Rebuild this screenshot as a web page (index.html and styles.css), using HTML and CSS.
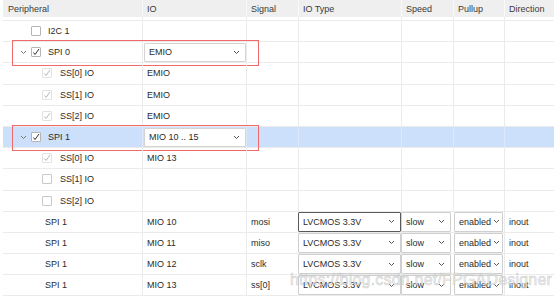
FILE: index.html
```html
<!DOCTYPE html>
<html lang="en">
<head>
    <meta charset="UTF-8">
    <meta name="viewport" content="width=device-width, initial-scale=1.0">
    <title>MIO Configuration</title>
    <link rel="stylesheet" href="styles.css">
</head>
<body>

<div class="table">
    <div class="row head">
        <div class="cell">Peripheral</div>
        <div class="cell">IO</div>
        <div class="cell">Signal</div>
        <div class="cell">IO Type</div>
        <div class="cell">Speed</div>
        <div class="cell">Pullup</div>
        <div class="cell">Direction</div>
    </div>

    <div class="row spacer">
        <div class="cell"></div><div class="cell"></div><div class="cell"></div><div class="cell"></div><div class="cell"></div><div class="cell"></div><div class="cell"></div>
    </div>

    <!-- I2C 1 -->
    <div class="row">
        <div class="cell tree lvl1"><span class="box"></span>I2C 1</div>
        <div class="cell"></div><div class="cell"></div><div class="cell"></div><div class="cell"></div><div class="cell"></div><div class="cell"></div>
    </div>

    <!-- SPI 0 -->
    <div class="row">
        <div class="cell tree lvl1">
            <svg class="twist" width="7" height="5" viewBox="0 0 7 5"><polyline points="1,1 3.5,3.5 6,1" /></svg>
            <span class="box"><svg width="8" height="8" viewBox="0 0 8 8"><polyline points="1.5,4.5 3,6.5 7,1" /></svg></span>SPI 0
        </div>
        <div class="cell"><div class="drop io">EMIO<svg width="7" height="5" viewBox="0 0 7 5"><polyline points="1,1 3.5,3.5 6,1" /></svg></div></div>
        <div class="cell"></div><div class="cell"></div><div class="cell"></div><div class="cell"></div><div class="cell"></div>
        <div class="mark"></div>
    </div>

    <div class="row">
        <div class="cell tree lvl2"><span class="box off"><svg width="8" height="8" viewBox="0 0 8 8"><polyline points="1.5,4.5 3,6.5 7,1" /></svg></span>SS[0] IO</div>
        <div class="cell">EMIO</div>
        <div class="cell"></div><div class="cell"></div><div class="cell"></div><div class="cell"></div><div class="cell"></div>
    </div>
    <div class="row">
        <div class="cell tree lvl2"><span class="box off"><svg width="8" height="8" viewBox="0 0 8 8"><polyline points="1.5,4.5 3,6.5 7,1" /></svg></span>SS[1] IO</div>
        <div class="cell">EMIO</div>
        <div class="cell"></div><div class="cell"></div><div class="cell"></div><div class="cell"></div><div class="cell"></div>
    </div>
    <div class="row">
        <div class="cell tree lvl2"><span class="box off"><svg width="8" height="8" viewBox="0 0 8 8"><polyline points="1.5,4.5 3,6.5 7,1" /></svg></span>SS[2] IO</div>
        <div class="cell">EMIO</div>
        <div class="cell"></div><div class="cell"></div><div class="cell"></div><div class="cell"></div><div class="cell"></div>
    </div>

    <!-- SPI 1 -->
    <div class="row selected">
        <div class="cell tree lvl1">
            <svg class="twist" width="7" height="5" viewBox="0 0 7 5"><polyline points="1,1 3.5,3.5 6,1" /></svg>
            <span class="box"><svg width="8" height="8" viewBox="0 0 8 8"><polyline points="1.5,4.5 3,6.5 7,1" /></svg></span>SPI 1
        </div>
        <div class="cell"><div class="drop io">MIO 10 .. 15<svg width="7" height="5" viewBox="0 0 7 5"><polyline points="1,1 3.5,3.5 6,1" /></svg></div></div>
        <div class="cell"></div><div class="cell"></div><div class="cell"></div><div class="cell"></div><div class="cell"></div>
        <div class="mark"></div>
    </div>

    <div class="row">
        <div class="cell tree lvl2"><span class="box off"><svg width="8" height="8" viewBox="0 0 8 8"><polyline points="1.5,4.5 3,6.5 7,1" /></svg></span>SS[0] IO</div>
        <div class="cell">MIO 13</div>
        <div class="cell"></div><div class="cell"></div><div class="cell"></div><div class="cell"></div><div class="cell"></div>
    </div>
    <div class="row">
        <div class="cell tree lvl2"><span class="box empty"></span>SS[1] IO</div>
        <div class="cell"></div>
        <div class="cell"></div><div class="cell"></div><div class="cell"></div><div class="cell"></div><div class="cell"></div>
    </div>
    <div class="row">
        <div class="cell tree lvl2"><span class="box empty"></span>SS[2] IO</div>
        <div class="cell"></div>
        <div class="cell"></div><div class="cell"></div><div class="cell"></div><div class="cell"></div><div class="cell"></div>
    </div>

    <!-- SPI 1 pins -->
    <div class="row">
        <div class="cell tree leaf">SPI 1</div>
        <div class="cell">MIO 10</div>
        <div class="cell">mosi</div>
        <div class="cell pad"><div class="drop focus">LVCMOS 3.3V<svg width="7" height="5" viewBox="0 0 7 5"><polyline points="1,1 3.5,3.5 6,1" /></svg></div></div>
        <div class="cell pad"><div class="drop">slow<svg width="7" height="5" viewBox="0 0 7 5"><polyline points="1,1 3.5,3.5 6,1" /></svg></div></div>
        <div class="cell pad"><div class="drop tight">enabled<svg width="7" height="5" viewBox="0 0 7 5"><polyline points="1,1 3.5,3.5 6,1" /></svg></div></div>
        <div class="cell">inout</div>
    </div>
    <div class="row">
        <div class="cell tree leaf">SPI 1</div>
        <div class="cell">MIO 11</div>
        <div class="cell">miso</div>
        <div class="cell pad"><div class="drop">LVCMOS 3.3V<svg width="7" height="5" viewBox="0 0 7 5"><polyline points="1,1 3.5,3.5 6,1" /></svg></div></div>
        <div class="cell pad"><div class="drop">slow<svg width="7" height="5" viewBox="0 0 7 5"><polyline points="1,1 3.5,3.5 6,1" /></svg></div></div>
        <div class="cell pad"><div class="drop tight">enabled<svg width="7" height="5" viewBox="0 0 7 5"><polyline points="1,1 3.5,3.5 6,1" /></svg></div></div>
        <div class="cell">inout</div>
    </div>
    <div class="row">
        <div class="cell tree leaf">SPI 1</div>
        <div class="cell">MIO 12</div>
        <div class="cell">sclk</div>
        <div class="cell pad"><div class="drop">LVCMOS 3.3V<svg width="7" height="5" viewBox="0 0 7 5"><polyline points="1,1 3.5,3.5 6,1" /></svg></div></div>
        <div class="cell pad"><div class="drop">slow<svg width="7" height="5" viewBox="0 0 7 5"><polyline points="1,1 3.5,3.5 6,1" /></svg></div></div>
        <div class="cell pad"><div class="drop tight">enabled<svg width="7" height="5" viewBox="0 0 7 5"><polyline points="1,1 3.5,3.5 6,1" /></svg></div></div>
        <div class="cell">inout</div>
    </div>
    <div class="row">
        <div class="cell tree leaf">SPI 1</div>
        <div class="cell">MIO 13</div>
        <div class="cell">ss[0]</div>
        <div class="cell pad"><div class="drop">LVCMOS 3.3V<svg width="7" height="5" viewBox="0 0 7 5"><polyline points="1,1 3.5,3.5 6,1" /></svg></div></div>
        <div class="cell pad"><div class="drop">slow<svg width="7" height="5" viewBox="0 0 7 5"><polyline points="1,1 3.5,3.5 6,1" /></svg></div></div>
        <div class="cell pad"><div class="drop tight">enabled<svg width="7" height="5" viewBox="0 0 7 5"><polyline points="1,1 3.5,3.5 6,1" /></svg></div></div>
        <div class="cell">inout</div>
    </div>
</div>

<div class="watermark">https://blog.csdn.net/FPGADesigner</div>

</body>
</html>
```

FILE: styles.css
```css
body {
    margin: 0;
    padding: 0;
    font-family: "Liberation Sans", Arial, sans-serif;
    font-size: 9px;
    color: #2b2b2b;
    background-color: white;
    overflow: hidden;
}

.table {
    margin-left: 3px;
}

.row {
    display: grid;
    grid-template-columns: 139px 104px 52px 103px 52px 51px 1fr;
    height: 20.2px;
    border-bottom: 1px solid #ebebeb;
    position: relative;
}

.cell {
    display: flex;
    align-items: center;
    padding-left: 4px;
    border-left: 1px solid #ebebeb;
    white-space: nowrap;
    overflow: hidden;
}

.cell:first-child {
    border-left: none;
}

.head {
    height: 17px;
    background-color: #efefef;
    border-bottom: none;
    color: #3a3a3a;
}

.head .cell {
    border-left-color: #f9f9f9;
    padding-left: 4px;
}

.head .cell:first-child {
    padding-left: 5px;
}

.spacer {
    height: 3px;
    border-bottom: 1px solid #ececec;
}

.selected {
    background-color: #cde0fb;
}

.selected .cell {
    border-left-color: #dde9fb;
}

/* tree column */
.tree {
    padding-left: 0;
}

.lvl1 {
    padding-left: 28px;
}

.lvl2 {
    padding-left: 39px;
}

.leaf {
    padding-left: 42px;
}

.twist {
    position: absolute;
    left: 17px;
    top: 8px;
}

.twist polyline {
    fill: none;
    stroke: #7a7a7a;
    stroke-width: 1;
}

.box {
    display: inline-flex;
    align-items: center;
    justify-content: center;
    width: 10px;
    height: 10px;
    box-sizing: border-box;
    border: 1px solid #b5b5b5;
    border-radius: 1px;
    background-color: white;
    margin-right: 7px;
}

.lvl2 .box {
    margin-right: 8px;
}

.box polyline {
    fill: none;
    stroke: #333;
    stroke-width: 1;
}

.box.off {
    border-color: #e2e2e2;
}

.box.off polyline {
    stroke: #b8b8b8;
}

.box.empty {
    border-color: #c8c8c8;
}

/* dropdowns */
.pad {
    padding-left: 0;
    border-left: none;
}

.drop {
    display: flex;
    align-items: center;
    justify-content: space-between;
    box-sizing: border-box;
    width: 100%;
    height: 20px;
    padding: 0 5px 0 4px;
    border: 1px solid #cfcfcf;
    background-color: white;
    border-radius: 1px;
}

.drop svg polyline {
    fill: none;
    stroke: #555;
    stroke-width: 1;
}

.drop.focus {
    border-color: #5a5a5a;
}

.drop.tight {
    width: 49px;
    margin-left: 1px;
    padding-right: 2px;
}

.cell.pad:nth-child(5) .drop {
    width: 50px;
}

.io {
    width: 102px;
    height: 19px;
    margin-left: -3px;
    border-color: #d4d4d4;
}

.mark {
    position: absolute;
    left: 9px;
    top: -2px;
    width: 247px;
    height: 26px;
    box-sizing: border-box;
    border: 1.5px solid #f06a6a;
    pointer-events: none;
}

.watermark {
    position: absolute;
    left: 290px;
    top: 271px;
    font-size: 16px;
    color: rgba(236, 236, 236, 0.7);
    -webkit-text-stroke: 0.6px rgba(175, 175, 175, 0.55);
    letter-spacing: 0.2px;
    white-space: nowrap;
}
```
